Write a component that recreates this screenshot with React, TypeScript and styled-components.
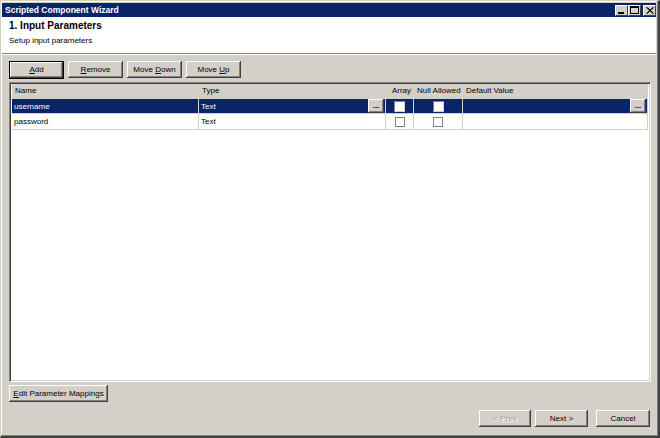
import React from "react";
import styled, { createGlobalStyle, css } from "styled-components";

const Global = createGlobalStyle`
  html, body { margin: 0; padding: 0; background: #d4d0c8; }
  body { font-family: "Liberation Sans", Arial, sans-serif; font-size: 8px; color: #000; }
  * { box-sizing: border-box; }
`;

const Window = styled.div`
  width: 660px;
  height: 438px;
  display: flex;
  flex-direction: column;
  background: #d4d0c8;
  border-top: 1px solid #d4d0c8;
  border-left: 1px solid #d4d0c8;
  border-right: 2px solid #404040;
  border-bottom: 2px solid #404040;
  box-shadow: inset -1px -1px 0 #808080, inset 1px 1px 0 #fff;
  padding: 2px 2px 0 1px;
`;

const TitleBar = styled.div`
  height: 14px;
  background: #0a246a;
  display: flex;
  align-items: center;
  justify-content: space-between;
  padding: 0 0 0 3px;
  flex-shrink: 0;
`;

const TitleText = styled.span`
  color: #fff;
  font-weight: bold;
  font-size: 8.5px;
`;

const Controls = styled.div`
  display: flex;
`;

const CtrlBtn = styled.div<{ $gap?: boolean }>`
  width: 13px;
  height: 11px;
  background: #d4d0c8;
  border-top: 1px solid #fff;
  border-left: 1px solid #fff;
  border-right: 1px solid #404040;
  border-bottom: 1px solid #404040;
  margin-left: ${(p) => (p.$gap ? "2px" : "0")};
  display: flex;
  align-items: center;
  justify-content: center;
`;

const Header = styled.div`
  background: #fff;
  height: 37px;
  padding: 2px 6px 0 7px;
  display: flex;
  flex-direction: column;
  gap: 4px;
  border-bottom: 1px solid #808080;
  flex-shrink: 0;
`;

const HeaderTitle = styled.div`
  font-weight: bold;
  font-size: 10px;
  line-height: 13px;
`;

const HeaderSub = styled.div`
  font-size: 8px;
  line-height: 10px;
`;

const Body = styled.div`
  flex: 1;
  display: flex;
  flex-direction: column;
  padding: 6px 5px 0 7px;
  border-top: 1px solid #fff;
`;

const Toolbar = styled.div`
  display: flex;
  align-items: center;
  gap: 4px;
  height: 17px;
  margin-bottom: 4px;
`;

const Button = styled.button<{ $w: number; $default?: boolean; $disabled?: boolean; $sep?: boolean }>`
  width: ${(p) => p.$w}px;
  height: ${(p) => (p.$default ? 18 : 17)}px;
  margin-left: ${(p) => (p.$sep ? 4 : 0)}px;
  font-family: inherit;
  font-size: 8px;
  padding: 0;
  background: #d4d0c8;
  color: ${(p) => (p.$disabled ? "#a0a0a0" : "#000")};
  border: none;
  box-shadow: inset -1px -1px 0 #404040, inset 1px 1px 0 #fff, inset -2px -2px 0 #808080;
  white-space: nowrap;
  ${(p) =>
    p.$default &&
    css`
      border: 1px solid #000;
    `}
  ${(p) =>
    p.$disabled &&
    css`
      text-shadow: 1px 1px 0 #fff;
    `}
`;

const Table = styled.div`
  height: 300px;
  background: #fff;
  border-top: 1px solid #808080;
  border-left: 1px solid #808080;
  border-right: 1px solid #fff;
  border-bottom: 1px solid #fff;
  box-shadow: inset 1px 1px 0 #404040, inset -1px -1px 0 #d4d0c8;
  padding: 1px 2px 2px 2px;
  display: flex;
  flex-direction: column;
`;

const cols = "187px 187px 28px 49px 1fr";

const HeadRow = styled.div`
  display: grid;
  grid-template-columns: ${cols};
  height: 14px;
  background: #d4d0c8;
  font-size: 8px;
  line-height: 14px;
`;

const HeadCell = styled.div<{ $right?: boolean }>`
  padding: 0 3px;
  text-align: ${(p) => (p.$right ? "right" : "left")};
  white-space: nowrap;
`;

const Row = styled.div<{ $sel?: boolean }>`
  display: grid;
  grid-template-columns: ${cols};
  height: 16px;
  background: ${(p) => (p.$sel ? "#0a246a" : "#fff")};
  color: ${(p) => (p.$sel ? "#fff" : "#000")};
  font-size: 8px;
  border-bottom: 1px solid #d4d0c8;
  border-top: ${(p) => (p.$sel ? "1px solid #d4d0c8" : "none")};
`;

const Cell = styled.div<{ $center?: boolean }>`
  border-right: 1px solid #d4d0c8;
  display: flex;
  align-items: center;
  justify-content: ${(p) => (p.$center ? "center" : "space-between")};
  padding-left: ${(p) => (p.$center ? 0 : 2)}px;
  white-space: nowrap;
`;

const Ellipsis = styled.div`
  width: 16px;
  height: 14px;
  background: #d4d0c8;
  color: #000;
  box-shadow: inset -1px -1px 0 #404040, inset 1px 1px 0 #fff, inset -2px -2px 0 #808080;
  font-size: 8px;
  font-weight: bold;
  display: flex;
  align-items: flex-end;
  justify-content: center;
  line-height: 8px;
  padding-bottom: 3px;
  margin-right: 1px;
`;

const Check = styled.div<{ $sel?: boolean }>`
  width: ${(p) => (p.$sel ? 11 : 10)}px;
  height: ${(p) => (p.$sel ? 11 : 10)}px;
  background: #fff;
  border: 1px solid ${(p) => (p.$sel ? "#d4d0c8" : "#808080")};
  ${(p) =>
    p.$sel &&
    css`
      border-top-color: #808080;
      border-left-color: #808080;
    `}
`;

const Middle = styled.div`
  padding-top: 3px;
`;

const Footer = styled.div`
  flex: 1;
  display: flex;
  justify-content: flex-end;
  align-items: flex-start;
  gap: 4px;
  padding-top: 8px;
  padding-right: 1px;
`;

const Glyph = styled.svg`
  display: block;
`;

function Min() {
  return (
    <Glyph width="7" height="7" viewBox="0 0 7 7">
      <rect x="0" y="5" width="6" height="2" fill="#000" />
    </Glyph>
  );
}
function Max() {
  return (
    <Glyph width="9" height="8" viewBox="0 0 9 8">
      <rect x="0.5" y="0.5" width="8" height="7" fill="none" stroke="#000" />
      <rect x="0" y="0" width="9" height="2" fill="#000" />
    </Glyph>
  );
}
function Close() {
  return (
    <Glyph width="8" height="7" viewBox="0 0 8 7">
      <path d="M0.5 0.5 L7 6.5 M1.5 0.5 L7.5 6.5 M7 0.5 L0.5 6.5 M7.5 0.5 L1 6.5" stroke="#000" strokeWidth="1" />
    </Glyph>
  );
}

export default function App() {
  return (
    <>
      <Global />
      <Window>
        <TitleBar>
          <TitleText>Scripted Component Wizard</TitleText>
          <Controls>
            <CtrlBtn><Min /></CtrlBtn>
            <CtrlBtn><Max /></CtrlBtn>
            <CtrlBtn $gap><Close /></CtrlBtn>
          </Controls>
        </TitleBar>
        <Header>
          <HeaderTitle>1. Input Parameters</HeaderTitle>
          <HeaderSub>Setup input parameters</HeaderSub>
        </Header>
        <Body>
          <Toolbar>
            <Button $w={55} $default><u>A</u>dd</Button>
            <Button $w={55}><u>R</u>emove</Button>
            <Button $w={55}>Move <u>D</u>own</Button>
            <Button $w={55}>Move <u>U</u>p</Button>
          </Toolbar>
          <Table>
            <HeadRow>
              <HeadCell>Name</HeadCell>
              <HeadCell>Type</HeadCell>
              <HeadCell $right>Array</HeadCell>
              <HeadCell $right>Null Allowed</HeadCell>
              <HeadCell>Default Value</HeadCell>
            </HeadRow>
            <Row $sel>
              <Cell>username</Cell>
              <Cell>Text<Ellipsis>...</Ellipsis></Cell>
              <Cell $center><Check $sel /></Cell>
              <Cell $center><Check $sel /></Cell>
              <Cell><span /><Ellipsis>...</Ellipsis></Cell>
            </Row>
            <Row>
              <Cell>password</Cell>
              <Cell>Text</Cell>
              <Cell $center><Check /></Cell>
              <Cell $center><Check /></Cell>
              <Cell />
            </Row>
          </Table>
          <Middle>
            <Button $w={99}><u>E</u>dit Parameter Mappings</Button>
          </Middle>
          <Footer>
            <Button $w={52} $disabled>&lt; Prev</Button>
            <Button $w={53}>Next &gt;</Button>
            <Button $w={54} $sep>Cancel</Button>
          </Footer>
        </Body>
      </Window>
    </>
  );
}
